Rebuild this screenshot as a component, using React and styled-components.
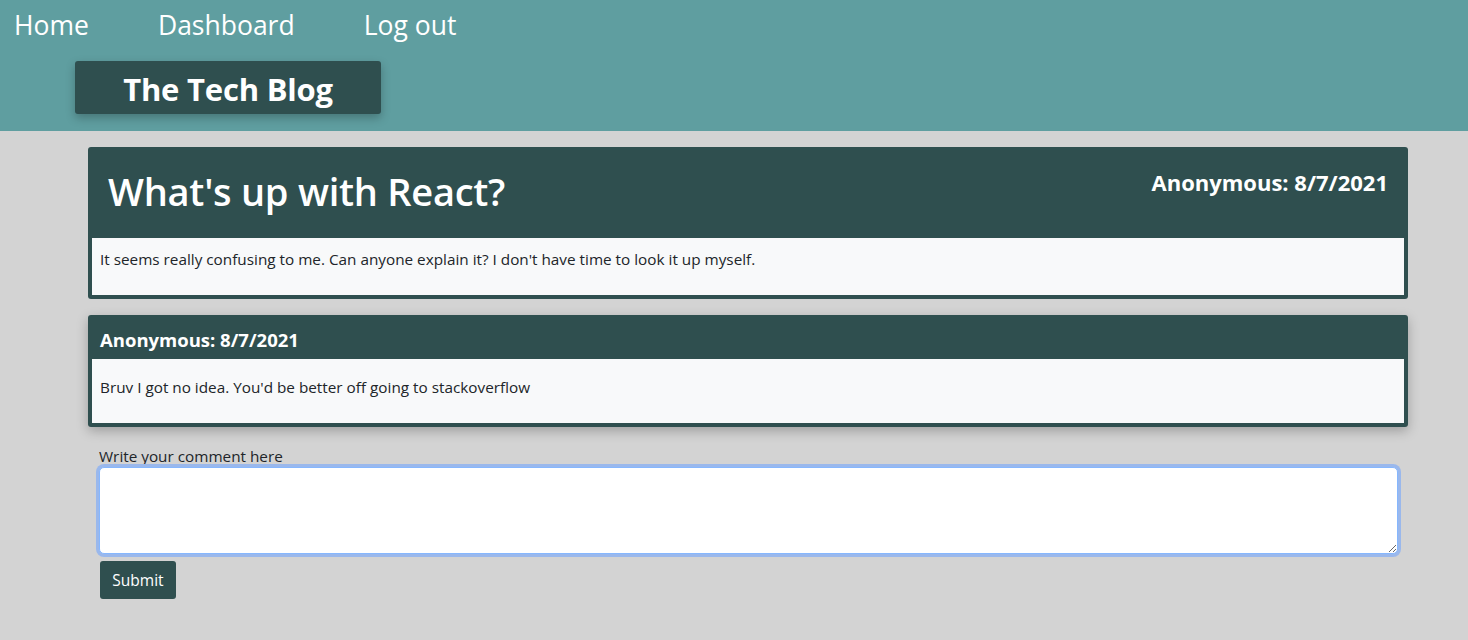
import React from "react";
import styled, { createGlobalStyle } from "styled-components";

const GlobalStyle = createGlobalStyle`
	body {
		margin: 0;
		background: #d3d3d3;
		font-family: "Open Sans", "Noto Sans", sans-serif;
		color: #212529;
	}
	* {
		box-sizing: border-box;
	}
`;

const Header = styled.header`
	background: #5f9ea0;
	height: 131px;
	display: flex;
	flex-direction: column;
`;

const Nav = styled.nav`
	display: flex;
	gap: 69px;
	padding: 7px 0 0 14px;
	height: 61px;

	a {
		color: #fff;
		font-size: 26.5px;
		font-weight: 400;
		text-decoration: none;
	}
`;

const TitleBox = styled.div`
	margin-left: 75px;
	width: 306px;
	height: 53px;
	background: #2f4f4f;
	border-radius: 3px;
	box-shadow: 0 4px 10px rgba(0, 0, 0, 0.25);
	display: flex;
	align-items: center;
	justify-content: center;

	h1 {
		margin: 2px 0 0;
		color: #fff;
		font-size: 31px;
		font-weight: 700;
		letter-spacing: -0.2px;
	}
`;

const Main = styled.main`
	width: 1320px;
	margin-left: 88px;
	padding-top: 16px;
	display: flex;
	flex-direction: column;
	gap: 16px;
`;

const Card = styled.section`
	background: #2f4f4f;
	border-radius: 3px;
	padding: 0 4px 4px;
	box-shadow: ${props => (props.raised ? "0 4px 12px rgba(0, 0, 0, 0.25)" : "none")};
`;

const CardHead = styled.div`
	display: flex;
	justify-content: space-between;
	align-items: flex-start;
	color: #fff;
	height: ${props => (props.big ? "91px" : "44px")};
	padding: ${props => (props.big ? "0 16px 0 16px" : "0 8px")};

	h2 {
		margin: 18px 0 0;
		font-size: 38px;
		font-weight: 600;
		letter-spacing: -0.25px;
	}
	h3 {
		margin: ${props => (props.big ? "20px 0 0" : "12px 0 0")};
		font-size: ${props => (props.big ? "22px" : "18.5px")};
		font-weight: 700;
	}
`;

const CardBody = styled.div`
	background: #f8f9fa;
	height: ${props => props.h}px;
	padding: ${props => props.pt}px 8px 0;
	font-size: 15.3px;
`;

const Form = styled.form`
	display: flex;
	flex-direction: column;
	align-items: flex-start;
	width: 1320px;
	margin: 19px 0 0 88px;
	padding: 0 10px 0 11px;

	label {
		font-size: 15.3px;
		line-height: 20px;
	}
`;

const TextArea = styled.textarea`
	width: 100%;
	height: 87px;
	border: 1px solid #86b7fe;
	border-radius: 5px;
	box-shadow: 0 0 0 3px #9ab8ec;
	outline: none;
	padding: 6px 12px;
	font-family: inherit;
	font-size: 16px;
	resize: vertical;
	margin-top: 1px;
	caret-color: #212529;
`;

const Button = styled.button`
	margin-top: 7px;
	margin-left: 1px;
	background: #2f4f4f;
	color: #fff;
	border: none;
	border-radius: 3px;
	width: 76px;
	height: 38px;
	font-family: inherit;
	font-size: 15.5px;
`;

export default function App() {
	return (
		<>
			<GlobalStyle />
			<Header>
				<Nav>
					<a href="#">Home</a>
					<a href="#">Dashboard</a>
					<a href="#">Log out</a>
				</Nav>
				<TitleBox>
					<h1>The Tech Blog</h1>
				</TitleBox>
			</Header>
			<Main>
				<Card>
					<CardHead big>
						<h2>What's up with React?</h2>
						<h3>Anonymous: 8/7/2021</h3>
					</CardHead>
					<CardBody h={57} pt={11}>
						It seems really confusing to me. Can anyone explain it? I don't have time to look it up myself.
					</CardBody>
				</Card>
				<Card raised>
					<CardHead>
						<h3>Anonymous: 8/7/2021</h3>
					</CardHead>
					<CardBody h={64} pt={18}>
						Bruv I got no idea. You'd be better off going to stackoverflow
					</CardBody>
				</Card>
			</Main>
			<Form onSubmit={e => e.preventDefault()}>
				<label htmlFor="comment">Write your comment here</label>
				<TextArea id="comment" autoFocus />
				<Button type="submit">Submit</Button>
			</Form>
		</>
	);
}
